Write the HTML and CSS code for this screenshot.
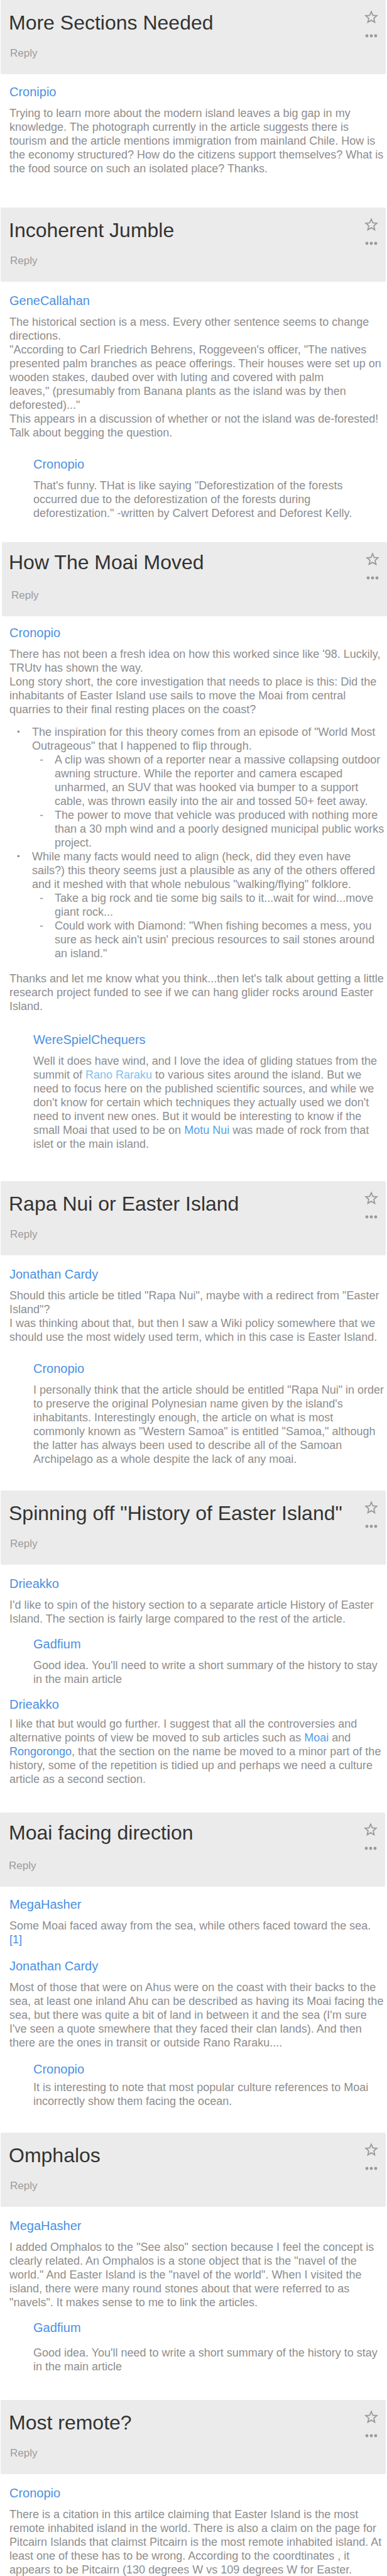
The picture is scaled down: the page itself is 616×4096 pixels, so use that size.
FILE: index.html
```html
<!DOCTYPE html>
<html lang="en">
<head>
<meta charset="utf-8">
<meta name="viewport" content="width=device-width, initial-scale=1">
<title>Discussion</title>
<link rel="stylesheet" href="styles.css">
</head>
<body>
<svg class="sprite" aria-hidden="true">
  <symbol id="star" viewBox="0 0 22 22"><path d="M11 2.500L13.530 8.320L19.840 8.930L15.090 13.130L16.470 19.320L11 16.100L5.530 19.320L6.910 13.130L2.160 8.930L8.470 8.320Z" fill="none" stroke="#999" stroke-width="1.800"/></symbol>
  <symbol id="dots" viewBox="0 0 20 6"><g fill="#999"><circle cx="3" cy="3" r="2.400"/><circle cx="10" cy="3" r="2.400"/><circle cx="17" cy="3" r="2.400"/></g></symbol>
</svg>
<main>
<section class="thread">
  <header class="bar">
    <div class="bar-text"><h2>More Sections Needed</h2><button class="reply">Reply</button></div>
    <div class="tools"><button aria-label="Star"><svg class="star"><use href="#star"/></svg></button><button aria-label="More"><svg class="dots"><use href="#dots"/></svg></button></div>
  </header>
  <div class="posts end-xl">
    <article class="post"><a class="author" href="#">Cronipio</a>
      <p>Trying to learn more about the modern island leaves a big gap in my knowledge. The photograph currently in the article suggests there is tourism and the article mentions immigration from mainland Chile. How is the economy structured? How do the citizens support themselves? What is the food source on such an isolated place? Thanks.</p></article>
  </div>
</section>
<section class="thread">
  <header class="bar">
    <div class="bar-text"><h2>Incoherent Jumble</h2><button class="reply">Reply</button></div>
    <div class="tools"><button aria-label="Star"><svg class="star"><use href="#star"/></svg></button><button aria-label="More"><svg class="dots"><use href="#dots"/></svg></button></div>
  </header>
  <div class="posts start-l end-s gap-l">
    <article class="post"><a class="author" href="#">GeneCallahan</a>
      <p>The historical section is a mess. Every other sentence seems to change directions.</p>
      <p>"According to Carl Friedrich Behrens, Roggeveen's officer, "The natives presented palm branches as peace offerings. Their houses were set up on wooden stakes, daubed over with luting and covered with palm leaves,"&nbsp;(presumably from Banana plants as the island was by then deforested)..."</p>
      <p>This appears in a discussion of whether or not the island was de-forested! Talk about begging the question.</p></article>
    <article class="post nested"><a class="author" href="#">Cronopio</a>
      <p>That's funny. THat is like saying "Deforestization of the forests occurred due to the deforestization of the forests during deforestization." -written by Calvert Deforest and Deforest Kelly.</p></article>
  </div>
</section>
<section class="thread">
  <header class="bar bar-right bar-raised">
    <div class="bar-text"><h2>How The Moai Moved</h2><button class="reply">Reply</button></div>
    <div class="tools"><button aria-label="Star"><svg class="star"><use href="#star"/></svg></button><button aria-label="More"><svg class="dots"><use href="#dots"/></svg></button></div>
  </header>
  <div class="posts start-s end-l gap-xl">
    <article class="post"><a class="author" href="#">Cronopio</a>
      <p>There has not been a fresh idea on how this worked since like '98. Luckily, TRUtv has shown the way.</p>
      <p>Long story short, the core investigation that needs to place is this: Did the inhabitants of Easter Island use sails to move the Moai from central quarries to their final resting places on the coast?</p>
      <ul class="points">
        <li>The inspiration for this theory comes from an episode of "World Most Outrageous" that I happened to flip through.
          <ul class="subpoints">
            <li>A clip was shown of a reporter near a massive collapsing outdoor awning structure. While the reporter and camera escaped unharmed, an SUV that was hooked via bumper to a support cable, was thrown easily into the air and tossed 50+ feet away.</li>
            <li>The power to move that vehicle was produced with nothing more than a 30 mph wind and a poorly designed municipal public works project.</li>
          </ul></li>
        <li>While many facts would need to align (heck, did they even have sails?) this theory seems just a plausible as any of the others offered and it meshed with that whole nebulous "walking/flying" folklore.
          <ul class="subpoints">
            <li>Take a big rock and tie some big sails to it...wait for wind...move giant rock...</li>
            <li>Could work with Diamond: "When fishing becomes a mess, you sure as heck ain't usin' precious resources to sail stones around an island."</li>
          </ul></li>
      </ul>
      <p>Thanks and let me know what you think...then let's talk about getting a little research project funded to see if we can hang glider rocks around Easter Island.</p></article>
    <article class="post nested"><a class="author" href="#">WereSpielChequers</a>
      <p>Well it does have wind, and I love the idea of gliding statues from the summit of <a class="link-pale" href="#">Rano Raraku</a> to various sites around the island. But we need to focus here on the published scientific sources, and while we don't know for certain which techniques they actually used we don't need to invent new ones. But it would be interesting to know if the small Moai that used to be on <a class="link-mid" href="#">Motu Nui</a> was made of rock from that islet or the main island.</p></article>
  </div>
</section>
<section class="thread">
  <header class="bar">
    <div class="bar-text"><h2>Rapa Nui or Easter Island</h2><button class="reply">Reply</button></div>
    <div class="tools"><button aria-label="Star"><svg class="star"><use href="#star"/></svg></button><button aria-label="More"><svg class="dots"><use href="#dots"/></svg></button></div>
  </header>
  <div class="posts start-l gap-l">
    <article class="post"><a class="author" href="#">Jonathan Cardy</a>
      <p>Should this article be titled "Rapa Nui", maybe with a redirect from "Easter Island"?</p>
      <p>I was thinking about that, but then I saw a Wiki policy somewhere that we should use the most widely used term, which in this case is Easter Island.</p></article>
    <article class="post nested"><a class="author" href="#">Cronopio</a>
      <p>I personally think that the article should be entitled "Rapa Nui" in order to preserve the original Polynesian name given by the island's inhabitants. Interestingly enough, the article on what is most commonly known as "Western Samoa" is entitled "Samoa," although the latter has always been used to describe all of the Samoan Archipelago as a whole despite the lack of any moai.</p></article>
  </div>
</section>
<section class="thread">
  <header class="bar">
    <div class="bar-text"><h2>Spinning off "History of Easter Island"</h2><button class="reply">Reply</button></div>
    <div class="tools"><button aria-label="Star"><svg class="star"><use href="#star"/></svg></button><button aria-label="More"><svg class="dots"><use href="#dots"/></svg></button></div>
  </header>
  <div class="posts start-l end-m">
    <article class="post"><a class="author" href="#">Drieakko</a>
      <p>I'd like to spin of the history section to a separate article History of Easter Island. The section is fairly large compared to the rest of the article.</p></article>
    <article class="post nested"><a class="author" href="#">Gadfium</a>
      <p>Good idea. You'll need to write a short summary of the history to stay in the main article</p></article>
    <article class="post tight"><a class="author" href="#">Drieakko</a>
      <p>I like that but would go further. I suggest that all the controversies and alternative points of view be moved to sub articles such as <a class="link-mid" href="#">Moai</a> and <a class="link" href="#">Rongorongo</a>, that the section on the name be moved to a minor part of the history, some of the repetition is tidied up and perhaps we need a culture article as a second section.</p></article>
  </div>
</section>
<section class="thread">
  <header class="bar bar-left bar-raised">
    <div class="bar-text"><h2>Moai facing direction</h2><button class="reply">Reply</button></div>
    <div class="tools"><button aria-label="Star"><svg class="star"><use href="#star"/></svg></button><button aria-label="More"><svg class="dots"><use href="#dots"/></svg></button></div>
  </header>
  <div class="posts gap-m">
    <article class="post"><a class="author" href="#">MegaHasher</a>
      <p>Some Moai faced away from the sea, while others faced toward the sea.<br><a class="link" href="#">[1]</a></p></article>
    <article class="post"><a class="author" href="#">Jonathan Cardy</a>
      <p>Most of those that were on Ahus were on the coast with their backs to the sea, at least one inland Ahu can be described as having its Moai facing the sea, but there was quite a bit of land in between it and the sea (I'm sure I've seen a quote smewhere that they faced their clan lands). And then there are the ones in transit or outside Rano Raraku....</p></article>
    <article class="post nested snug"><a class="author" href="#">Cronopio</a>
      <p>It is interesting to note that most popular culture references to Moai incorrectly show them facing the ocean.</p></article>
  </div>
</section>
<section class="thread">
  <header class="bar">
    <div class="bar-text"><h2>Omphalos</h2><button class="reply">Reply</button></div>
    <div class="tools"><button aria-label="Star"><svg class="star"><use href="#star"/></svg></button><button aria-label="More"><svg class="dots"><use href="#dots"/></svg></button></div>
  </header>
  <div class="posts start-l end-m">
    <article class="post"><a class="author" href="#">MegaHasher</a>
      <p>I added Omphalos to the "See also" section because I feel the concept is clearly related. An Omphalos is a stone object that is the "navel of the world." And Easter Island is the "navel of the world". When I visited the island, there were many round stones about that were referred to as "navels". It makes sense to me to link the articles.</p></article>
    <article class="post nested loose"><a class="author" href="#">Gadfium</a>
      <p>Good idea. You'll need to write a short summary of the history to stay in the main article</p></article>
  </div>
</section>
<section class="thread">
  <header class="bar">
    <div class="bar-text"><h2>Most remote?</h2><button class="reply">Reply</button></div>
    <div class="tools"><button aria-label="Star"><svg class="star"><use href="#star"/></svg></button><button aria-label="More"><svg class="dots"><use href="#dots"/></svg></button></div>
  </header>
  <div class="posts start-l end-none">
    <article class="post"><a class="author" href="#">Cronopio</a>
      <p>There is a citation in this artilce claiming that Easter Island is the most remote inhabited island in the world. There is also a claim on the page for Pitcairn Islands that claimst Pitcairn is the most remote inhabited island. At least one of these has to be wrong. According to the coordtinates , it appears to be Pitcairn (130 degrees W vs 109 degrees W for Easter.</p></article>
  </div>
</section>
</main>
</body>
</html>
```
FILE: styles.css
```css
* { box-sizing: border-box; }
body {
  margin: 0;
  background: #fff;
  color: #8e8e8e;
  font: 18px/22px "Liberation Sans", Arial, sans-serif;
}
h2, p, ul { margin: 0; padding: 0; font-weight: normal; }
ul { list-style: none; }
a { color: #4a90e2; text-decoration: none; }
button {
  display: block;
  padding: 0;
  border: 0;
  background: none;
  color: #9b9b9b;
  font: inherit;
  text-align: left;
}
svg { display: block; }
.sprite { display: none; }

.bar {
  display: flex;
  justify-content: space-between;
  height: 118px;
  margin: 0 2px 0 1px;
  padding: 16px 12px 0 13px;
  border-radius: 2px;
  background: #ebebeb;
}
.bar-right { margin: 0 0 0 3px; padding-left: 11px; }
.bar-left { margin: 0 3px 0 0; padding-left: 14px; }
.bar h2 { color: #333; font-size: 32px; line-height: 40px; }
.reply { margin: 18px 0 0 2px; font-size: 17px; }
.bar-left .reply { margin-left: 0; }
.bar-right .reply { margin-left: 4px; }
.bar-raised { padding-top: 12px; }
.bar-raised .reply { margin-top: 22px; }
.bar-raised .tools { padding-top: 4px; }
.tools { display: flex; flex-direction: column; align-items: center; gap: 16px; }
.star { width: 22px; height: 22px; }
.dots { width: 20px; height: 6px; }

.posts {
  display: flex;
  flex-direction: column;
  gap: 17px;
  padding: 16px 3px 39px 15px;
}
.start-s { padding-top: 14px; }
.start-l { padding-top: 18px; }
.end-none { padding-bottom: 0; }
.end-s { padding-bottom: 35px; }
.end-m { padding-bottom: 42px; }
.end-l { padding-bottom: 48px; }
.end-xl { padding-bottom: 51px; }
.gap-m { gap: 19px; }
.gap-l { gap: 27px; }
.gap-xl { gap: 30px; }

.nested { padding-left: 38px; }
.author { display: block; width: fit-content; margin-bottom: 11px; font-size: 20px; line-height: 24px; }
.snug .author { margin-bottom: 6px; }
.tight .author { margin-bottom: 8px; }
.loose .author { margin-bottom: 17px; }
.link-mid { color: #559fe9; }
.link-pale { color: #80c3f3; }

.points { margin: 14px 0 18px; padding-left: 36px; }
.subpoints { padding-left: 36px; }
.points li::before {
  content: "•";
  float: left;
  width: 24px;
  margin-left: -24px;
  font-size: 13px;
}
.points .subpoints li::before { content: "-"; font-size: 18px; }
```
